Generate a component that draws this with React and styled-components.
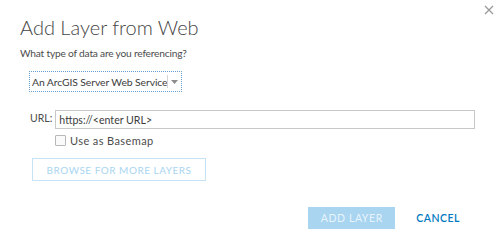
import React from "react";
import styled, { createGlobalStyle } from "styled-components";

const Colors = {
  TEXT: "#4c4c4c",
  BORDER: "#c8c8c8",
  BLUE: "#0079c1",
  LIGHT_BLUE: "#a9d5f0",
  PALE_BLUE: "#c6e3f5",
};

const GlobalStyle = createGlobalStyle`
  html, body {
    margin: 0;
    padding: 0;
    background: #fff;
  }
  body {
    font-family: Lato, "Liberation Sans", sans-serif;
    color: ${Colors.TEXT};
  }
`;

export default function App() {
  return (
    <>
      <GlobalStyle />
      <Dialog>
        <CloseButton aria-label="Close">
          <svg width="10" height="10" viewBox="0 0 10 10">
            <path d="M1 1 L9 9 M9 1 L1 9" stroke="#9a9a9a" strokeWidth="1.3" />
          </svg>
        </CloseButton>
        <Title>Add Layer from Web</Title>
        <Question>What type of data are you referencing?</Question>
        <Select>
          <SelectText>An ArcGIS Server Web Service</SelectText>
          <SelectArrow>
            <svg width="7" height="4" viewBox="0 0 7 4">
              <path d="M0 0 L7 0 L3.5 4 Z" fill="#8c8c8c" />
            </svg>
          </SelectArrow>
        </Select>
        <UrlRow>
          <UrlLabel>URL:</UrlLabel>
          <UrlInput defaultValue="https://<enter URL>" />
        </UrlRow>
        <CheckRow>
          <Checkbox />
          <CheckLabel>Use as Basemap</CheckLabel>
        </CheckRow>
        <BrowseButton>Browse for more layers</BrowseButton>
        <Footer>
          <AddButton>Add Layer</AddButton>
          <CancelButton>Cancel</CancelButton>
        </Footer>
      </Dialog>
    </>
  );
}

const Dialog = styled.div`
  position: relative;
  width: 500px;
  height: 248px;
  box-sizing: border-box;
  padding: 15px 0 0 20px;
  display: flex;
  flex-direction: column;
  align-items: flex-start;
`;

const CloseButton = styled.div`
  position: absolute;
  top: 5px;
  right: 6px;
  width: 10px;
  height: 10px;
  display: flex;
`;

const Title = styled.h1`
  margin: 0;
  font-size: 20px;
  font-weight: 300;
  line-height: 24px;
  color: #444;
`;

const Question = styled.div`
  margin-top: 7px;
  font-size: 10.2px;
  letter-spacing: -0.2px;
  line-height: 14px;
`;

const Select = styled.div`
  margin: 11px 0 0 9px;
  width: 153px;
  height: 21px;
  box-sizing: border-box;
  border: 1px dotted #6a9fd0;
  display: flex;
  align-items: center;
`;

const SelectText = styled.div`
  flex: 1;
  padding-left: 2px;
  font-size: 10.4px;
  letter-spacing: -0.1px;
  color: #3c3c3c;
  white-space: nowrap;
  overflow: hidden;
`;

const SelectArrow = styled.div`
  width: 13px;
  height: 13px;
  border-left: 1px solid #d4d4d4;
  display: flex;
  align-items: center;
  justify-content: center;
`;

const UrlRow = styled.div`
  margin: 18px 0 0 10px;
  display: flex;
  align-items: center;
  gap: 3px;
`;

const UrlLabel = styled.div`
  font-size: 10.5px;
  margin-top: -4px;
`;

const UrlInput = styled.input`
  width: 420px;
  height: 19px;
  box-sizing: border-box;
  border: 1px solid ${Colors.BORDER};
  padding: 0 3px;
  font-family: Lato, "Liberation Sans", sans-serif;
  font-size: 10.6px;
  color: #3c3c3c;
  outline: none;
`;

const CheckRow = styled.div`
  margin: 5px 0 0 35px;
  display: flex;
  align-items: center;
  gap: 4px;
`;

const Checkbox = styled.span`
  width: 9px;
  height: 9px;
  border: 1px solid #b8b8b8;
  border-radius: 1px;
  background: #fafafa;
`;

const CheckLabel = styled.span`
  font-size: 11px;
  letter-spacing: 0.4px;
`;

const BrowseButton = styled.button`
  margin: 11px 0 0 12px;
  width: 174px;
  height: 23px;
  border: 1px solid ${Colors.PALE_BLUE};
  background: #fff;
  color: ${Colors.LIGHT_BLUE};
  font-family: Lato, "Liberation Sans", sans-serif;
  font-size: 10px;
  letter-spacing: 0.5px;
  text-transform: uppercase;
  padding: 0;
`;

const Footer = styled.div`
  margin-top: 26px;
  align-self: stretch;
  padding-right: 40px;
  display: flex;
  justify-content: flex-end;
  align-items: center;
  gap: 21px;
`;

const AddButton = styled.button`
  width: 87px;
  height: 22px;
  border: none;
  background: ${Colors.LIGHT_BLUE};
  color: #e8f4fc;
  font-family: Lato, "Liberation Sans", sans-serif;
  font-size: 10.5px;
  letter-spacing: 0.6px;
  text-transform: uppercase;
  padding: 0;
`;

const CancelButton = styled.button`
  border: none;
  background: none;
  padding: 0;
  color: ${Colors.BLUE};
  font-family: Lato, "Liberation Sans", sans-serif;
  font-size: 10.5px;
  font-weight: 600;
  letter-spacing: 0.5px;
  text-transform: uppercase;
`;
